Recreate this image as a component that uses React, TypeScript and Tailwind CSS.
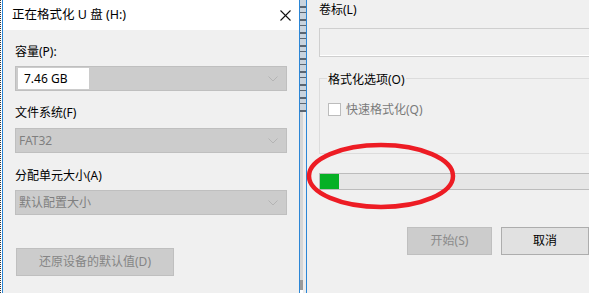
import React from 'react';

const font = { fontFamily: '"Noto Sans", "Noto Sans CJK SC", sans-serif' };

const Chevron: React.FC<{ color?: string }> = ({ color = '#b4b4b4' }) => (
  <svg width="10" height="6" viewBox="0 0 10 6" className="shrink-0">
    <polyline points="0.5,0.5 5,5 9.5,0.5" fill="none" stroke={color} strokeWidth="1" />
  </svg>
);

interface ComboProps {
  value: string;
  active?: boolean;
}

const Combo: React.FC<ComboProps> = ({ value, active }) => (
  <div className="w-[272px] h-[25px] bg-[#cccccc] border border-[#bfbfbf] flex items-center pr-[8px]">
    {active ? (
      <div className="ml-[2px] w-[71px] h-[21px] bg-white flex items-center pl-[6px] text-black">{value}</div>
    ) : (
      <div className="pl-[3px] text-[#7f7f7f]">{value}</div>
    )}
    <div className="flex-1" />
    <Chevron />
  </div>
);

const Label: React.FC<{ text: string; className?: string }> = ({ text, className }) => (
  <div className={`h-[16px] leading-[16px] text-black ${className ?? ''}`}>{text}</div>
);

export default function App() {
  return (
    <div className="relative w-[589px] h-[293px] flex overflow-hidden bg-white text-[12px]" style={font}>
      {/* left screen edge */}
      <div className="w-[2px] border-l border-dotted border-[#333]" />
      <div className="w-px bg-[#2b86d6]" />

      {/* format dialog */}
      <div className="w-[296px] flex flex-col">
        <div className="h-[30px] bg-white flex items-center pl-[9px] pr-[8px]">
          <span className="text-[12.5px] text-black">正在格式化 U 盘 (H:)</span>
          <div className="flex-1" />
          <svg width="11" height="11" viewBox="0 0 11 11">
            <line x1="0.5" y1="0.5" x2="10.5" y2="10.5" stroke="#111" strokeWidth="1.1" />
            <line x1="10.5" y1="0.5" x2="0.5" y2="10.5" stroke="#111" strokeWidth="1.1" />
          </svg>
        </div>
        <div className="flex-1 bg-[#f0f0f0] px-[12px] flex flex-col">
          <Label text="容量(P):" className="mt-[14px]" />
          <div className="mt-[6px]">
            <Combo value="7.46 GB" active />
          </div>
          <Label text="文件系统(F)" className="mt-[14px]" />
          <div className="mt-[7px]">
            <Combo value="FAT32" />
          </div>
          <Label text="分配单元大小(A)" className="mt-[15px]" />
          <div className="mt-[6px]">
            <Combo value="默认配置大小" />
          </div>
          <div className="mt-[33px] ml-[1px] w-[158px] h-[28px] bg-[#cccccc] border border-[#bfbfbf] flex items-center justify-center text-[#858585]">
            还原设备的默认值(D)
          </div>
        </div>
      </div>

      {/* seam between the two windows */}
      <div className="w-px bg-[#2b86d6]" />
      <div className="w-[6px] flex flex-col">
        <div className="h-[112px] bg-[repeating-linear-gradient(to_bottom,#c9d3dd_0px,#c9d3dd_6px,#5b6570_6px,#5b6570_8px,#c9d3dd_8px,#c9d3dd_12px,#5b6570_12px,#5b6570_13px)]" />
        <div className="flex-1 flex">
          <div className="w-[3px] flex flex-col">
            <div className="flex-1 bg-[#d6d6d6]" />
            <div className="h-[10px] bg-[#9a9a9a]" />
            <div className="h-[3px] bg-white" />
          </div>
          <div className="flex-1 bg-[#ededed]" />
        </div>
      </div>
      <div className="w-px bg-[#2b86d6]" />

      {/* right part of dialog */}
      <div className="flex-1 bg-[#f0f0f0] pl-[12px] flex flex-col overflow-hidden">
        <Label text="卷标(L)" className="mt-[2px]" />
        <div className="mt-[10px] w-[300px] h-[29px] border border-[#cfcfcf] bg-[#f0f0f0] shadow-[inset_0_-1px_0_#ffffff]" />

        <div className="relative mt-[21px] w-[300px] h-[76px] border border-[#dcdcdc]">
          <div className="absolute top-[-7px] left-[7px] px-[1px] h-[16px] leading-[16px] bg-[#f0f0f0] text-black">
            格式化选项(O)
          </div>
          <div className="mt-[24px] ml-[8px] flex items-center">
            <div className="w-[13px] h-[13px] bg-white border border-[#bcbcbc]" />
            <span className="ml-[5px] text-[#7a7a7a] leading-[13px]">快速格式化(Q)</span>
          </div>
        </div>

        <div className="mt-[19px] w-[300px] h-[17px] border border-[#bcbcbc] bg-[#e6e6e6]">
          <div className="w-[19px] h-full bg-[#06b025]" />
        </div>

        <div className="mt-[37px] flex">
          <div className="ml-[88px] w-[88px] h-[28px] bg-[#cccccc] border border-[#bfbfbf] flex items-center justify-center text-[#8a8a8a]">
            开始(S)
          </div>
          <div className="ml-[9px] w-[88px] h-[28px] shrink-0 bg-[#e1e1e1] border border-[#adadad] flex items-center justify-center text-black">
            取消
          </div>
        </div>
      </div>

      {/* red annotation ellipse */}
      <svg className="absolute left-[305px] top-[142px]" width="152" height="68" viewBox="0 0 152 68">
        <ellipse cx="76" cy="34" rx="72" ry="31" fill="none" stroke="#ed1c24" strokeWidth="4.5" />
      </svg>
    </div>
  );
}
